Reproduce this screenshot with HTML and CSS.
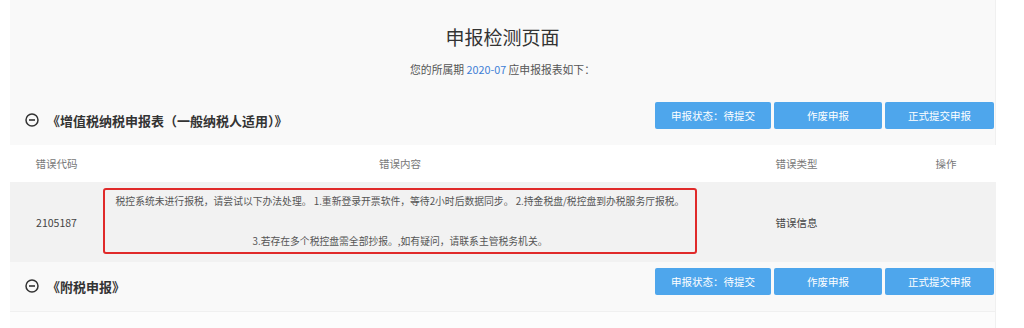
FILE: index.html
```html
<!DOCTYPE html>
<html lang="zh-CN">
<head>
  <meta charset="UTF-8" />
  <title>申报检测页面</title>
  <link rel="stylesheet" href="styles.css">
</head>
<body>
  <div class="page">
    <!-- Page header -->
    <div class="page-head">
      <h1>申报检测页面</h1>
      <p>您的所属期 <span class="period">2020-07</span> 应申报报表如下：</p>
    </div>

    <!-- VAT section -->
    <div class="section">
      <div class="section-bar">
        <div class="section-title">
          <svg class="fold-icon" width="14" height="14" viewBox="0 0 14 14">
            <circle cx="7" cy="7" r="6" fill="none" stroke="#333" stroke-width="1.5" />
            <line x1="4" y1="7" x2="10" y2="7" stroke="#333" stroke-width="1.6" />
          </svg>
          <span>《增值税纳税申报表（一般纳税人适用）》</span>
        </div>
        <div class="actions">
          <button class="btn btn-status">申报状态：待提交</button>
          <button class="btn btn-void">作废申报</button>
          <button class="btn btn-submit">正式提交申报</button>
        </div>
      </div>
      <table class="err-table">
        <colgroup>
          <col class="col-code">
          <col class="col-msg">
          <col class="col-type">
          <col class="col-op">
        </colgroup>
        <thead>
          <tr>
            <th>错误代码</th>
            <th>错误内容</th>
            <th>错误类型</th>
            <th>操作</th>
          </tr>
        </thead>
        <tbody>
          <tr>
            <td>2105187</td>
            <td class="msg-cell">
              <div class="err-msg">税控系统未进行报税，请尝试以下办法处理。 1.重新登录开票软件，等待2小时后数据同步。 2.持金税盘/税控盘到办税服务厅报税。<br><br>3.若存在多个税控盘需全部抄报。,如有疑问，请联系主管税务机关。</div>
            </td>
            <td>错误信息</td>
            <td></td>
          </tr>
        </tbody>
      </table>
    </div>

    <!-- Surtax section -->
    <div class="section">
      <div class="section-bar">
        <div class="section-title">
          <svg class="fold-icon" width="14" height="14" viewBox="0 0 14 14">
            <circle cx="7" cy="7" r="6" fill="none" stroke="#333" stroke-width="1.5" />
            <line x1="4" y1="7" x2="10" y2="7" stroke="#333" stroke-width="1.6" />
          </svg>
          <span>《附税申报》</span>
        </div>
        <div class="actions">
          <button class="btn btn-status">申报状态：待提交</button>
          <button class="btn btn-void">作废申报</button>
          <button class="btn btn-submit">正式提交申报</button>
        </div>
      </div>
      <div class="section-foot"></div>
    </div>
  </div>
</body>
</html>
```

FILE: styles.css
```css
* {
  margin: 0;
  padding: 0;
  box-sizing: border-box;
  font-family: 'Noto Sans CJK SC', 'Noto Sans', sans-serif;
}

body {
  background: #fff;
  color: #333;
}

.page {
  width: 986px;
  margin-left: 10px;
  background: #f9f9f9;
  border-right: 1px solid #f0f0f0;
}

/* Header */
.page-head {
  height: 96px;
  text-align: center;
}

.page-head h1 {
  padding-top: 24px;
  font-size: 19px;
  line-height: 26px;
  font-weight: normal;
  color: #333;
}

.page-head p {
  margin-top: 11px;
  font-size: 10.8px;
  line-height: 16px;
  color: #555;
}

.period {
  color: #3f7fd6;
}

/* Section bar */
.section-bar {
  height: 49px;
  display: flex;
  justify-content: space-between;
  align-items: flex-start;
  padding-top: 6px;
  padding-left: 15px;
  padding-right: 1px;
}

.section-title {
  display: flex;
  align-items: center;
  gap: 8px;
  margin-top: 8px;
  height: 20px;
  font-size: 13px;
  font-weight: bold;
  color: #333;
}

.actions {
  display: flex;
  gap: 3px;
}

.btn {
  height: 27px;
  border: none;
  border-radius: 2px;
  background: #4ea6ec;
  color: #fff;
  font-size: 10.5px;
  cursor: pointer;
}

.btn-status { width: 116px; }
.btn-void { width: 108px; }
.btn-submit { width: 109px; }

/* Error table */
.err-table {
  width: 100%;
  border-collapse: collapse;
  table-layout: fixed;
}

.col-code { width: 93px; }
.col-msg { width: 594px; }
.col-type { width: 199px; }
.col-op { width: 100px; }

.err-table th {
  height: 37px;
  background: #fff;
  font-size: 10.5px;
  font-weight: normal;
  color: #777;
  text-align: center;
}

.err-table td {
  height: 80px;
  background: #f2f2f2;
  font-size: 10.5px;
  color: #444;
  text-align: center;
}

.err-table td.msg-cell {
  padding: 6px 0 8px;
}

.err-msg {
  height: 66px;
  border: 2px solid #e02a2a;
  border-radius: 3px;
  padding: 1px 0;
  font-size: 9.8px;
  line-height: 20px;
  color: #555;
}

.section-foot {
  height: 17px;
  background: #fcfcfc;
  border-top: 1px solid #f0f0f0;
}
```
